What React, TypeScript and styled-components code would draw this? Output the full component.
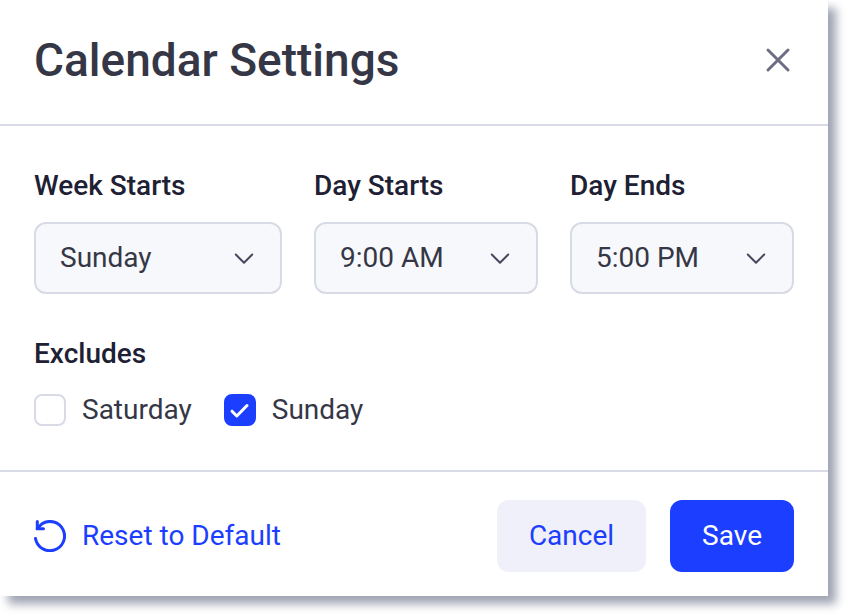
import React, { useState } from "react";
import styled, { createGlobalStyle } from "styled-components";

const color = {
  ink: "#353746",
  label: "#1e2033",
  line: "#d8dae6",
  field: "#f7f8fc",
  muted: "#6d6e85",
  primary: "#1b3eff",
  soft: "#f0f0fa",
};

const GlobalStyle = createGlobalStyle`
  *, *::before, *::after { box-sizing: border-box; }
  body {
    margin: 0;
    background: #ffffff;
    color: ${color.ink};
    font-family: Roboto, "Liberation Sans", sans-serif;
    font-size: 28px;
    line-height: 32px;
  }
  button, select, input { font: inherit; margin: 0; }
`;

const Page = styled.main`
  padding: 0 20px 20px 0;
`;

const Dialog = styled.section`
  background: #ffffff;
  box-shadow: 8px 8px 9px #a0a4b4;
`;

const Header = styled.header`
  display: flex;
  align-items: center;
  justify-content: space-between;
  padding: 32px 34px 36px;
  border-bottom: 2px solid ${color.line};
`;

const Title = styled.h1`
  margin: 0;
  font-size: 46px;
  line-height: 56px;
  font-weight: 500;
`;

const CloseButton = styled.button`
  display: flex;
  padding: 0;
  border: 0;
  background: none;
  color: ${color.muted};
  cursor: pointer;
`;

const Body = styled.div`
  display: flex;
  flex-direction: column;
  gap: 44px;
  padding: 44px 34px;
`;

const Fields = styled.div`
  display: grid;
  grid-template-columns: 31fr 28fr 28fr;
  gap: 32px;
`;

const Field = styled.div`
  display: flex;
  flex-direction: column;
  gap: 20px;
`;

const FieldLabel = styled.label`
  color: ${color.label};
  font-weight: 500;
`;

const SelectBox = styled.div`
  display: grid;
  align-items: center;

  > * { grid-area: 1 / 1; }

  > svg {
    justify-self: end;
    margin-right: 26px;
    pointer-events: none;
  }
`;

const Select = styled.select`
  appearance: none;
  width: 100%;
  height: 72px;
  padding: 0 64px 0 24px;
  border: 2px solid ${color.line};
  border-radius: 12px;
  background: ${color.field};
  color: ${color.ink};
`;

const Excludes = styled.fieldset`
  min-width: 0;
  margin: 0;
  padding: 0;
  border: 0;
`;

const Legend = styled.legend`
  margin-bottom: 24px;
  padding: 0;
  color: ${color.label};
  font-weight: 500;
`;

const Options = styled.div`
  display: flex;
  flex-wrap: wrap;
  gap: 32px;
`;

const Option = styled.label`
  display: flex;
  align-items: center;
  gap: 16px;
  cursor: pointer;
`;

const CheckBox = styled.span`
  display: grid;

  > * { grid-area: 1 / 1; }
  > svg { pointer-events: none; }
`;

const CheckInput = styled.input`
  appearance: none;
  width: 32px;
  height: 32px;
  border: 2px solid ${color.line};
  border-radius: 8px;
  background: #ffffff;

  &:checked {
    border-color: ${color.primary};
    background: ${color.primary};
  }
`;

const Footer = styled.footer`
  display: flex;
  align-items: center;
  justify-content: space-between;
  padding: 28px 34px 24px;
  border-top: 2px solid ${color.line};
`;

const ResetButton = styled.button`
  display: flex;
  align-items: center;
  gap: 16px;
  padding: 0;
  border: 0;
  background: none;
  color: ${color.primary};
  cursor: pointer;
`;

const Actions = styled.div`
  display: flex;
  gap: 24px;
`;

const ActionButton = styled.button<{ $primary?: boolean }>`
  height: 72px;
  padding: 0 32px;
  border: 0;
  border-radius: 12px;
  background: ${(p) => (p.$primary ? color.primary : color.soft)};
  color: ${(p) => (p.$primary ? "#ffffff" : color.primary)};
  cursor: pointer;
`;

const hours = Array.from({ length: 24 }, (_, h) => `${h % 12 || 12}:00 ${h < 12 ? "AM" : "PM"}`);
const days = ["Sunday", "Monday", "Tuesday", "Wednesday", "Thursday", "Friday", "Saturday"];

const defaults = {
  week: "Sunday",
  start: "9:00 AM",
  end: "5:00 PM",
  excludes: { Saturday: false, Sunday: true } as Record<string, boolean>,
};

type SelectFieldProps = {
  id: string;
  label: string;
  value: string;
  options: string[];
  onChange: (value: string) => void;
};

function SelectField({ id, label, value, options, onChange }: SelectFieldProps) {
  return (
    <Field>
      <FieldLabel htmlFor={id}>{label}</FieldLabel>
      <SelectBox>
        <Select id={id} value={value} onChange={(e) => onChange(e.target.value)}>
          {options.map((option) => (
            <option key={option}>{option}</option>
          ))}
        </Select>
        <svg width="24" height="24" viewBox="0 0 24 24" fill="none" aria-hidden="true">
          <path d="M3.8 8.5l8.2 8.2 8.2-8.2" stroke="#46475c" strokeWidth="2" strokeLinecap="round" strokeLinejoin="round" />
        </svg>
      </SelectBox>
    </Field>
  );
}

export default function App() {
  const [settings, setSettings] = useState(defaults);

  return (
    <>
      <GlobalStyle />
      <Page>
        <Dialog role="dialog" aria-labelledby="dialog-title">
          <Header>
            <Title id="dialog-title">Calendar Settings</Title>
            <CloseButton type="button" aria-label="Close">
              <svg width="32" height="32" viewBox="0 0 32 32" fill="none" aria-hidden="true">
                <path d="M6 6l20 20M26 6L6 26" stroke="currentColor" strokeWidth="3" strokeLinecap="round" />
              </svg>
            </CloseButton>
          </Header>
          <Body>
            <Fields>
              <SelectField
                id="week"
                label="Week Starts"
                value={settings.week}
                options={days}
                onChange={(week) => setSettings({ ...settings, week })}
              />
              <SelectField
                id="start"
                label="Day Starts"
                value={settings.start}
                options={hours}
                onChange={(start) => setSettings({ ...settings, start })}
              />
              <SelectField
                id="end"
                label="Day Ends"
                value={settings.end}
                options={hours}
                onChange={(end) => setSettings({ ...settings, end })}
              />
            </Fields>
            <Excludes>
              <Legend>Excludes</Legend>
              <Options>
                {Object.entries(settings.excludes).map(([day, checked]) => (
                  <Option key={day}>
                    <CheckBox>
                      <CheckInput
                        type="checkbox"
                        checked={checked}
                        onChange={() =>
                          setSettings({ ...settings, excludes: { ...settings.excludes, [day]: !checked } })
                        }
                      />
                      {checked && (
                        <svg width="32" height="32" viewBox="0 0 32 32" fill="none" aria-hidden="true">
                          <path
                            d="M8 17.2l4.8 4.8L23 11.5"
                            stroke="#ffffff"
                            strokeWidth="3"
                            strokeLinecap="round"
                            strokeLinejoin="round"
                          />
                        </svg>
                      )}
                    </CheckBox>
                    {day}
                  </Option>
                ))}
              </Options>
            </Excludes>
          </Body>
          <Footer>
            <ResetButton type="button" onClick={() => setSettings(defaults)}>
              <svg width="32" height="32" viewBox="0 0 32 32" fill="none" aria-hidden="true">
                <path
                  d="M1.5 18.5A14.6 14.6 0 1 0 8 3.8L3.4 8.4"
                  stroke="currentColor"
                  strokeWidth="3"
                  strokeLinecap="round"
                  strokeLinejoin="round"
                />
                <path
                  d="M3.3 1.5v7.2h6.2"
                  stroke="currentColor"
                  strokeWidth="3"
                  strokeLinecap="round"
                />
              </svg>
              Reset to Default
            </ResetButton>
            <Actions>
              <ActionButton type="button">Cancel</ActionButton>
              <ActionButton type="button" $primary>
                Save
              </ActionButton>
            </Actions>
          </Footer>
        </Dialog>
      </Page>
    </>
  );
}
